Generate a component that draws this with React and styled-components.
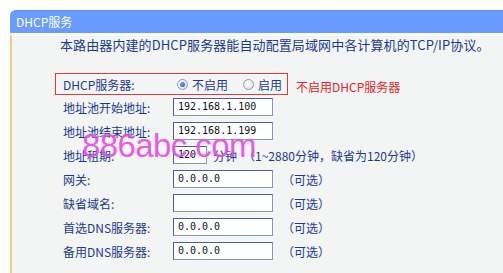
import React from "react";
import styled, { createGlobalStyle } from "styled-components";

const GlobalStyle = createGlobalStyle`
  html, body {
    margin: 0;
    padding: 0;
    background: #ffffff;
    overflow: hidden;
  }
  body {
    font-family: "Noto Sans CJK SC", "DejaVu Sans", sans-serif;
    font-size: 12px;
  }
`

const Page = styled.div`
  padding: 10px 0 0 10px;
  height: 273px;
  box-sizing: border-box;
  position: relative;
`

const Panel = styled.div`
  display: flex;
  flex-direction: column;
  height: 100%;
`

const Header = styled.div`
  height: 23px;
  box-sizing: border-box;
  background: #6a9bff;
  border-top: 1px solid #5b8cf0;
  border-top-left-radius: 6px;
  color: #ffffff;
  font-size: 12px;
  line-height: 21px;
  padding-left: 6px;
`

const Body = styled.div`
  flex: 1;
  background: #f3f4f4;
  border-left: 2px solid #f3c983;
  border-top: 3px solid #fbfcfd;
  padding: 0 0 0 51px;
`

const Intro = styled.div`
  color: #1d3a8a;
  font-size: 13px;
  line-height: 18px;
  letter-spacing: 0.1px;
  white-space: nowrap;
  margin: 0 0 19px -3px;
`

const Row = styled.div`
  display: flex;
  align-items: center;
  height: 24px;
`

const BoxedRow = styled(Row)`
  height: 22px;
  width: 233px;
  box-sizing: border-box;
  margin-left: -8px;
  padding-left: 7px;
  border: 1px solid #e03a3a;
  position: relative;
`

const Label = styled.span`
  width: 110px;
  flex: none;
  color: #1d3a8a;
  font-size: 12px;
`

const Input = styled.div`
  width: ${p => p.$w || 100}px;
  height: 18px;
  box-sizing: border-box;
  background: #ffffff;
  border: 1px solid #4e5f94;
  border-right-color: #8796bd;
  border-bottom-color: #8796bd;
  font-family: "DejaVu Sans Mono", "Liberation Mono", monospace;
  font-size: 10px;
  line-height: 16px;
  padding-left: 4px;
  color: #111;
  flex: none;
`

const Note = styled.span`
  color: #1d3a8a;
  margin-left: ${p => p.$ml || 9}px;
  white-space: nowrap;
  font-size: 12px;
`

const RadioGroup = styled.label`
  display: flex;
  align-items: center;
  margin-left: ${p => p.$ml || 4}px;
  color: #1d3a8a;
`

const RadioDot = styled.span`
  width: 11px;
  height: 11px;
  box-sizing: border-box;
  border-radius: 50%;
  border: 1px solid #8d9bb3;
  background: radial-gradient(circle at 40% 35%, #ffffff 0%, #e4e7ee 70%, #c9cfdb 100%);
  margin-right: 4px;
  position: relative;
  &::after {
    content: "";
    display: ${p => (p.$on ? "block" : "none")};
    position: absolute;
    left: 2px;
    top: 2px;
    width: 5px;
    height: 5px;
    border-radius: 50%;
    background: radial-gradient(circle at 40% 35%, #6f9cf4 0%, #2250c8 100%);
  }
`

const Hint = styled.span`
  position: absolute;
  left: 240px;
  top: 4px;
  color: #e02424;
  white-space: nowrap;
`

const Watermark = styled.div`
  position: absolute;
  left: 82px;
  top: 127px;
  font-family: "Liberation Sans", Arial, sans-serif;
  font-size: 33px;
  color: #e44de6;
  opacity: 0.9;
  letter-spacing: -0.6px;
  pointer-events: none;
`

const fields = [
  { label: "地址池开始地址:", value: "192.168.1.100" },
  { label: "地址池结束地址:", value: "192.168.1.199" },
  { label: "地址租期:", value: "120", width: 34, note: "分钟", extra: "（1~2880分钟，缺省为120分钟）" },
  { label: "网关:", value: "0.0.0.0", note: "（可选）" },
  { label: "缺省域名:", value: "", note: "（可选）" },
  { label: "首选DNS服务器:", value: "0.0.0.0", note: "（可选）" },
  { label: "备用DNS服务器:", value: "0.0.0.0", note: "（可选）" },
]

const App = () => {
  return (
    <>
      <GlobalStyle />
      <Page>
        <Panel>
          <Header>DHCP服务</Header>
          <Body>
            <Intro>本路由器内建的DHCP服务器能自动配置局域网中各计算机的TCP/IP协议。</Intro>
            <BoxedRow>
              <Label>DHCP服务器:</Label>
              <RadioGroup>
                <RadioDot $on />
                不启用
              </RadioGroup>
              <RadioGroup $ml={15}>
                <RadioDot />
                启用
              </RadioGroup>
              <Hint>不启用DHCP服务器</Hint>
            </BoxedRow>
            {fields.map(f => (
              <Row key={f.label}>
                <Label>{f.label}</Label>
                <Input $w={f.width}>{f.value}</Input>
                {f.note && <Note $ml={f.width ? 6 : 9}>{f.note}</Note>}
                {f.extra && <Note $ml={6}>{f.extra}</Note>}
              </Row>
            ))}
          </Body>
        </Panel>
        <Watermark>886abc.com</Watermark>
      </Page>
    </>
  )
}

export default App;
